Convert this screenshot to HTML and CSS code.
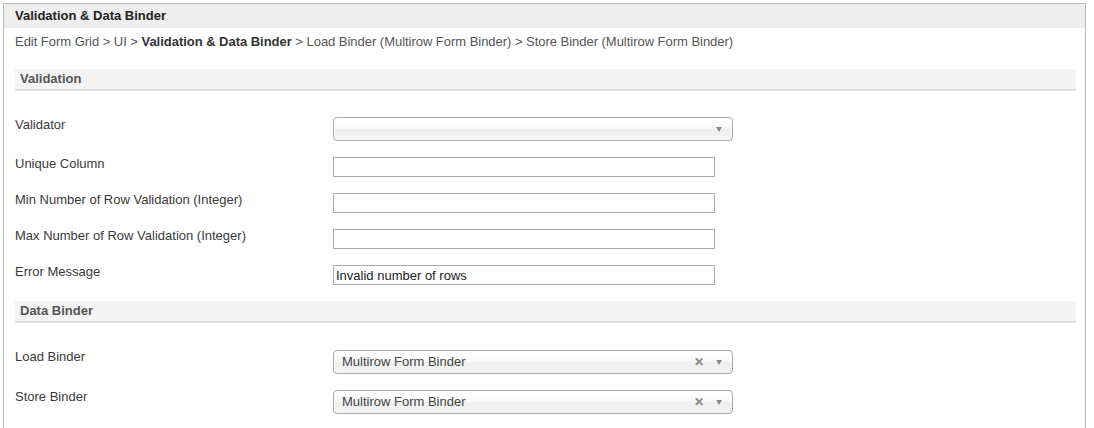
FILE: index.html
```html
<!DOCTYPE html>
<html lang="en">
<head>
  <meta charset="UTF-8">
  <title>Validation &amp; Data Binder</title>
  <link rel="stylesheet" href="styles.css">
</head>
<body>
  <div class="frame">
    <div class="frame-title">Validation &amp; Data Binder</div>
    <div class="crumbs">
      Edit Form Grid &gt; UI &gt; <b>Validation &amp; Data Binder</b> &gt; Load Binder (Multirow Form Binder) &gt; Store Binder (Multirow Form Binder)
    </div>

    <div class="section">
      <div class="section-head">Validation</div>
      <div class="rows">
        <div class="row row-select">
          <label>Validator</label>
          <div class="select2">
            <span class="chosen"></span>
            <span class="arrow"></span>
          </div>
        </div>
        <div class="row">
          <label>Unique Column</label>
          <input type="text" value="">
        </div>
        <div class="row">
          <label>Min Number of Row Validation (Integer)</label>
          <input type="text" value="">
        </div>
        <div class="row">
          <label>Max Number of Row Validation (Integer)</label>
          <input type="text" value="">
        </div>
        <div class="row">
          <label>Error Message</label>
          <input type="text" value="Invalid number of rows">
        </div>
      </div>
    </div>

    <div class="section">
      <div class="section-head">Data Binder</div>
      <div class="rows">
        <div class="row row-select">
          <label>Load Binder</label>
          <div class="select2">
            <span class="chosen">Multirow Form Binder</span>
            <span class="clear">&#x2715;</span>
            <span class="arrow"></span>
          </div>
        </div>
        <div class="row row-select">
          <label>Store Binder</label>
          <div class="select2">
            <span class="chosen">Multirow Form Binder</span>
            <span class="clear">&#x2715;</span>
            <span class="arrow"></span>
          </div>
        </div>
      </div>
    </div>
  </div>
</body>
</html>
```

FILE: styles.css
```css
body {
  margin: 0;
  font-family: "Liberation Sans", Arial, sans-serif;
  font-size: 13px;
  color: #333;
  background: #fff;
}

.frame {
  margin: 3px 0 0 3px;
  width: 1083px;
  height: 440px;
  box-sizing: border-box;
  border: 1px solid #bbb;
}

.frame-title {
  height: 24px;
  line-height: 24px;
  padding-left: 11px;
  background-color: #eee;
  font-weight: bold;
  color: #222;
}

.crumbs {
  padding: 6px 11px 0;
  line-height: 16px;
  color: #555;
  letter-spacing: -0.03px;
}

.crumbs b {
  color: #333;
}

.section {
  margin: 0 9px 0 11px;
}

.section-head {
  margin-top: 19px;
  height: 20px;
  line-height: 20px;
  padding-left: 5px;
  background-color: #f4f4f4;
  border-bottom: 2px solid #ddd;
  font-weight: bold;
  color: #555;
}

.section + .section .section-head {
  margin-top: 16px;
}

.rows {
  padding-top: 26px;
  display: flex;
  flex-direction: column;
  gap: 15px;
}

.section + .section .rows {
  padding-top: 27px;
  gap: 16px;
}

.row {
  display: flex;
  align-items: flex-start;
}

.row label {
  width: 318px;
  line-height: 16px;
  color: #3a3a3a;
}

.row input {
  margin: 1px 0 0;
  width: 382px;
  height: 20px;
  box-sizing: border-box;
  border: 1px solid #aaa;
  padding: 0 2px;
  font-family: "Liberation Sans", Arial, sans-serif;
  font-size: 13px;
  color: #222;
}

.section + .section .row-select label {
  margin-top: -1px;
}

.select2 {
  width: 400px;
  height: 24px;
  box-sizing: border-box;
  border: 1px solid #aaa;
  border-radius: 4px;
  background: linear-gradient(to bottom, #fff 20%, #f6f6f6 50%, #eee 52%, #f4f4f4 100%);
  box-shadow: inset 0 0 3px #fff;
  display: flex;
  align-items: center;
  padding-left: 8px;
  color: #444;
}

.select2 .chosen {
  flex: 1;
  line-height: 22px;
}

.select2 .clear {
  font-size: 12px;
  font-weight: bold;
  color: #888;
  margin-right: 12px;
}

.select2 .arrow {
  width: 0;
  height: 0;
  margin-right: 10px;
  border-left: 3px solid transparent;
  border-right: 3px solid transparent;
  border-top: 5px solid #888;
}
```
